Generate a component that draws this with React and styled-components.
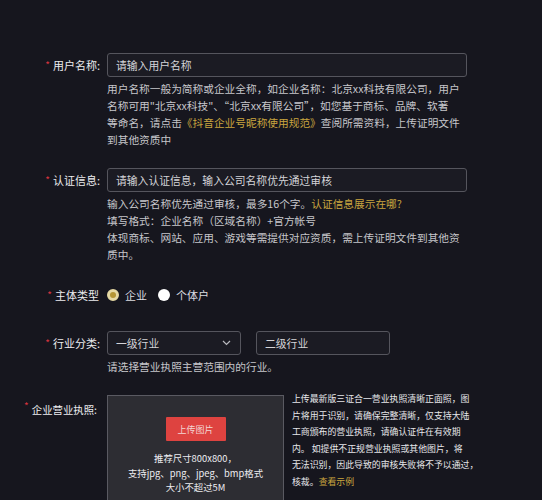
import React from "react";
import styled, { createGlobalStyle } from "styled-components";

const Global = createGlobalStyle`
  html, body { margin: 0; padding: 0; background: #16161e; }
  body { font-family: "Noto Sans CJK SC", "Noto Sans", sans-serif; color: #d6d6da; }
`;

const Page = styled.div`
  width: 542px;
  height: 500px;
  overflow: hidden;
  background: #16161e;
  padding-top: 53px;
  box-sizing: border-box;
  display: flex;
  flex-direction: column;
  gap: 20px;
`;

const Row = styled.div`
  display: grid;
  grid-template-columns: 100px 1fr;
  column-gap: 7px;
  margin-bottom: ${(p) => p.$extra || 0}px;
`;

const Label = styled.div`
  display: flex;
  justify-content: flex-end;
  align-items: ${(p) => (p.$top ? "flex-start" : "center")};
  height: ${(p) => (p.$top ? "auto" : "24px")};
  padding-top: ${(p) => (p.$top ? "6px" : "0")};
  padding-right: ${(p) => p.$pr || 0}px;
  font-size: ${(p) => p.$size || 11}px;
  line-height: 17px;
  color: #ececef;
  white-space: nowrap;
`;

const Star = styled.span`
  color: #d9343f;
  font-size: 10px;
  margin-right: 3px;
  line-height: 1;
`;

const Field = styled.div`
  display: flex;
  flex-direction: column;
  min-width: 0;
`;

const Input = styled.div`
  width: 360px;
  height: 24px;
  box-sizing: border-box;
  border: 1px solid #55555d;
  border-radius: 3px;
  background: #1b1b23;
  display: flex;
  align-items: center;
  padding-left: 8px;
  font-size: 10.8px;
  color: #d4d4d8;
`;

const Help = styled.div`
  margin-top: 3px;
  font-size: 10.7px;
  line-height: 17px;
  color: #c6c6cb;
`;

const Line = styled.div`
  white-space: nowrap;
`;

const Link = styled.span`
  color: #c9a53e;
`;

const RadioGroup = styled.div`
  display: flex;
  align-items: center;
  height: 24px;
  font-size: 11px;
  color: #dcdce0;
`;

const RadioItem = styled.label`
  display: flex;
  align-items: center;
  gap: 6px;
  margin-right: 11px;
`;

const RadioDot = styled.span`
  width: 12px;
  height: 12px;
  border-radius: 50%;
  box-sizing: border-box;
  background: ${(p) => (p.$checked ? "#b49535" : "#ffffff")};
  border: ${(p) => (p.$checked ? "3px solid #e6d9a4" : "none")};
  display: inline-block;
`;

const Selects = styled.div`
  display: flex;
  gap: 15px;
`;

const Select = styled.div`
  width: 134px;
  height: 24px;
  box-sizing: border-box;
  border: 1px solid #55555d;
  border-radius: 3px;
  background: #1b1b23;
  display: flex;
  align-items: center;
  justify-content: space-between;
  padding: 0 9px 0 8px;
  font-size: 10.8px;
  color: #d4d4d8;
`;

const UploadWrap = styled.div`
  display: flex;
  gap: 8px;
  align-items: flex-start;
`;

const UploadBox = styled.div`
  width: 177px;
  height: 130px;
  box-sizing: border-box;
  border: 1px solid #5a5a62;
  border-bottom: none;
  background: #2d2d33;
  display: flex;
  flex-direction: column;
  align-items: center;
  padding-top: 21px;
  flex-shrink: 0;
`;

const UploadButton = styled.div`
  width: 60px;
  height: 24px;
  background: #de4340;
  color: #f3d6d4;
  font-size: 9px;
  display: flex;
  align-items: center;
  justify-content: center;
  border-radius: 1px;
`;

const UploadTip = styled.div`
  margin-top: 10px;
  font-size: 9.4px;
  line-height: 14.5px;
  color: #ececf0;
  text-align: center;
`;

const UploadNote = styled.div`
  margin-top: -4px;
  font-size: 8.9px;
  line-height: 16.6px;
  color: #e6e6ea;
`;

const Chevron = () => (
  <svg width="9" height="6" viewBox="0 0 9 6" fill="none">
    <path d="M1 1l3.5 3.5L8 1" stroke="#b9b9be" strokeWidth="1.2" />
  </svg>
);

export default function App() {
  return (
    <>
      <Global />
      <Page>
        <Row>
          <Label>
            <Star>*</Star>用户名称:
          </Label>
          <Field>
            <Input>请输入用户名称</Input>
            <Help>
              <Line>用户名称一般为简称或企业全称，如企业名称：北京xx科技有限公司，用户</Line>
              <Line>名称可用"北京xx科技"、“北京xx有限公司”，如您基于商标、品牌、软著</Line>
              <Line>
                等命名，请点击<Link>《抖音企业号昵称使用规范》</Link>查阅所需资料，上传证明文件
              </Line>
              <Line>到其他资质中</Line>
            </Help>
          </Field>
        </Row>

        <Row>
          <Label>
            <Star>*</Star>认证信息:
          </Label>
          <Field>
            <Input>请输入认证信息，输入公司名称优先通过审核</Input>
            <Help>
              <Line>
                输入公司名称优先通过审核，最多16个字。<Link>认证信息展示在哪?</Link>
              </Line>
              <Line>填写格式：企业名称（区域名称）+官方帐号</Line>
              <Line>体现商标、网站、应用、游戏等需提供对应资质，需上传证明文件到其他资</Line>
              <Line>质中。</Line>
            </Help>
          </Field>
        </Row>

        <Row $extra={4}>
          <Label $pr={1}>
            <Star>*</Star>主体类型
          </Label>
          <RadioGroup>
            <RadioItem>
              <RadioDot $checked />
              企业
            </RadioItem>
            <RadioItem>
              <RadioDot />
              个体户
            </RadioItem>
          </RadioGroup>
        </Row>

        <Row>
          <Label>
            <Star>*</Star>行业分类:
          </Label>
          <Field>
            <Selects>
              <Select>
                一级行业
                <Chevron />
              </Select>
              <Select>二级行业</Select>
            </Selects>
            <Help>
              <Line>请选择营业执照主营范围内的行业。</Line>
            </Help>
          </Field>
        </Row>

        <Row>
          <Label $top $size={10.4} $pr={3}>
            <Star>*</Star>企业营业执照:
          </Label>
          <UploadWrap>
            <UploadBox>
              <UploadButton>上传图片</UploadButton>
              <UploadTip>
                推荐尺寸800x800，
                <br />
                支持jpg、png、jpeg、bmp格式
                <br />
                大小不超过5M
              </UploadTip>
            </UploadBox>
            <UploadNote>
              <Line>上传最新版三证合一营业执照清晰正面照，图</Line>
              <Line>片将用于识别，请确保完整清晰，仅支持大陆</Line>
              <Line>工商颁布的营业执照，请确认证件在有效期</Line>
              <Line>内。 如提供不正规营业执照或其他图片，将</Line>
              <Line>无法识别，因此导致的审核失败将不予以通过，</Line>
              <Line>
                核裁。<Link>查看示例</Link>
              </Line>
            </UploadNote>
          </UploadWrap>
        </Row>
      </Page>
    </>
  );
}
